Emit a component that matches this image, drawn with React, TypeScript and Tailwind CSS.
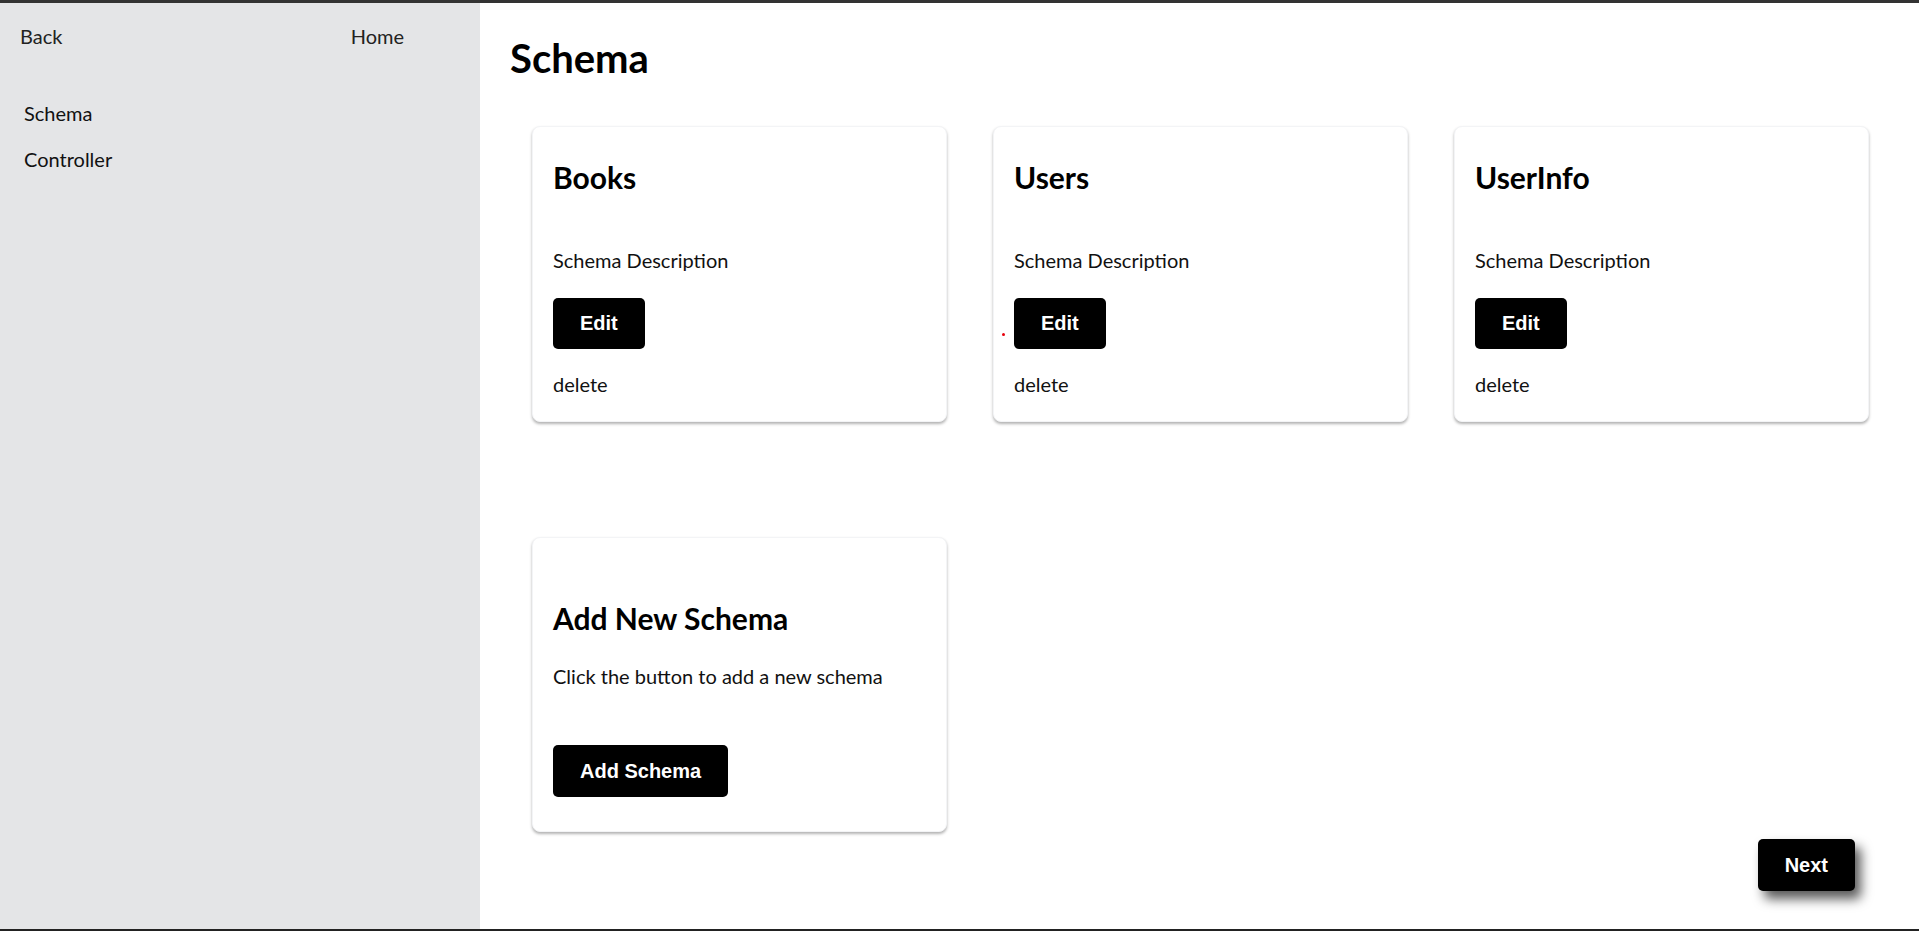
const schemas = [
  { name: "Books", description: "Schema Description" },
  { name: "Users", description: "Schema Description" },
  { name: "UserInfo", description: "Schema Description" },
];

const sans = "font-['Lato',_'Open_Sans',_sans-serif]";
const btn =
  "font-['Liberation_Sans',_Arial,_sans-serif] font-bold text-[20px] leading-[23px] text-white bg-black rounded-[5px] px-[27px]";

function SchemaCard({ name, description, marker }: { name: string; description: string; marker?: boolean }) {
  return (
    <div className="relative w-[415px] h-[296px] rounded-[8px] border border-gray-100 bg-white shadow-[0_2px_3px_rgba(0,0,0,0.3)] px-[20px] pt-[32px]">
      <h2 className="text-[30px] leading-[36px] font-bold text-black">{name}</h2>
      <p className="mt-[51px] text-[20px] leading-[28px] text-[#111]">{description}</p>
      <button className={`${btn} mt-[24px] h-[51px]`}>Edit</button>
      <p className="mt-[21px] text-[20px] leading-[28px] text-[#111]">delete</p>
      {marker && <span className="absolute left-[8px] top-[206px] w-[3px] h-[3px] rounded-full bg-red-600" />}
    </div>
  );
}

export default function App() {
  return (
    <div className={`${sans} flex h-[931px] w-full border-t-[3px] border-t-[#333] border-b-2 border-b-[#222] bg-white`}>
      <aside className="w-[480px] shrink-0 bg-[#e4e5e7] text-[#222]">
        <div className="flex w-[404px] justify-between pl-[20px] pt-[19px] text-[20px] leading-[28px]">
          <span>Back</span>
          <span>Home</span>
        </div>
        <nav className="mt-[49px] flex flex-col gap-[18px] pl-[24px] text-[20px] leading-[28px] text-[#111]">
          <a>Schema</a>
          <a>Controller</a>
        </nav>
      </aside>

      <main className="flex-1 pl-[30px] pr-[51px] pt-[31px]">
        <h1 className="text-[40px] leading-[48px] font-bold text-black">Schema</h1>

        <div className="mt-[44px] ml-[22px] grid grid-cols-[415px_415px_415px] gap-x-[46px] gap-y-[115px]">
          {schemas.map((s, i) => (
            <SchemaCard key={s.name} name={s.name} description={s.description} marker={i === 1} />
          ))}

          <div className="w-[415px] h-[295px] rounded-[8px] border border-gray-100 bg-white shadow-[0_2px_3px_rgba(0,0,0,0.3)] px-[20px] pt-[62px]">
            <h2 className="text-[30px] leading-[36px] font-bold text-black">Add New Schema</h2>
            <p className="mt-[26px] text-[20px] leading-[28px] text-[#111]">Click the button to add a new schema</p>
            <button className={`${btn} mt-[55px] h-[52px]`}>Add Schema</button>
          </div>
        </div>

        <div className="mt-[7px] flex justify-end pr-[14px]">
          <button className={`${btn} h-[52px] shadow-[6px_8px_12px_rgba(0,0,0,0.65)]`}>Next</button>
        </div>
      </main>
    </div>
  );
}
